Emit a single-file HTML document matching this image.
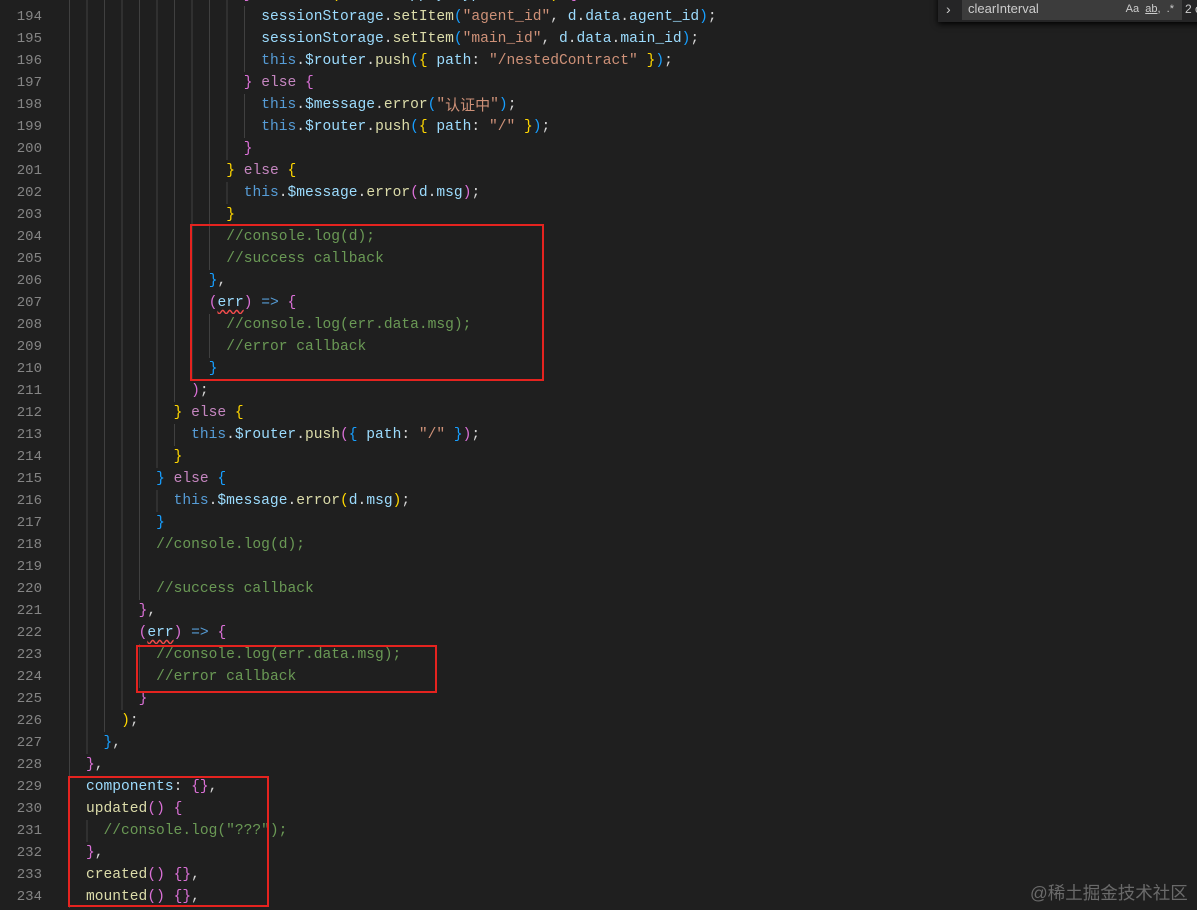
<!DOCTYPE html>
<html><head><meta charset="utf-8"><style>
html,body{margin:0;padding:0;background:#1f1f1f;width:1197px;height:910px;overflow:hidden;position:relative}
.code{position:absolute;left:0;top:-16px;font-family:"Liberation Mono","Noto Sans CJK SC",monospace;font-size:14.6px;}
.l{height:22px;line-height:22px;white-space:pre;display:flex;overflow:hidden}
.n{width:42px;text-align:right;color:#858585;font-size:14px;flex:none;}
.g{margin-left:26.5px;flex:none;height:22px;background:repeating-linear-gradient(to right,#404040 0 1px,transparent 1px 17.52px);}
.t{color:#d4d4d4}
.c{color:#6a9955}.s{color:#ce9178}.v{color:#9cdcfe}.f{color:#dcdcaa}.k{color:#569cd6}.e{color:#c586c0}
.y{color:#ffd700}.p{color:#da70d6}.b{color:#179fff}
.cjk{font-family:"Noto Sans CJK SC",sans-serif;font-size:15px;display:inline-block;height:22px;line-height:22px;vertical-align:top}
.sq{text-decoration:underline wavy #f14c4c;text-underline-offset:3px}
.box{position:absolute;border:2px solid #e5231f;box-sizing:border-box}
.find{position:absolute;left:938px;top:-6px;width:270px;height:28px;background:#252526;box-shadow:0 2px 6px #000}
.inp{position:absolute;left:24px;top:4px;width:220px;height:22px;background:#3c3c3c;color:#ccc;font-family:"Liberation Sans",sans-serif;font-size:13px;line-height:22px;padding-left:6px;box-sizing:border-box}
.wm{position:absolute;left:1030px;top:880px;color:#6a6a6a;font-family:"Liberation Sans","Noto Sans CJK SC",sans-serif;font-size:17.5px}
</style></head><body>
<div class="code">
<div class="l"><span class="n">193</span><span class="g" style="width:175.2px"></span><span class="t"><span class="p">}</span> <span class="e">else if</span> <span class="y">(</span><span class="v">d</span>.<span class="v">data</span>.<span class="v">apply_type</span> == <span class="s">"2"</span><span class="y">)</span> <span class="p">{</span></span></div>
<div class="l"><span class="n">194</span><span class="g" style="width:192.7px"></span><span class="t"><span class="v">sessionStorage</span>.<span class="f">setItem</span><span class="b">(</span><span class="s">"agent_id"</span>, <span class="v">d</span>.<span class="v">data</span>.<span class="v">agent_id</span><span class="b">)</span>;</span></div>
<div class="l"><span class="n">195</span><span class="g" style="width:192.7px"></span><span class="t"><span class="v">sessionStorage</span>.<span class="f">setItem</span><span class="b">(</span><span class="s">"main_id"</span>, <span class="v">d</span>.<span class="v">data</span>.<span class="v">main_id</span><span class="b">)</span>;</span></div>
<div class="l"><span class="n">196</span><span class="g" style="width:192.7px"></span><span class="t"><span class="k">this</span>.<span class="v">$router</span>.<span class="f">push</span><span class="b">(</span><span class="y">{</span> <span class="v">path</span>: <span class="s">"/nestedContract"</span> <span class="y">}</span><span class="b">)</span>;</span></div>
<div class="l"><span class="n">197</span><span class="g" style="width:175.2px"></span><span class="t"><span class="p">}</span> <span class="e">else</span> <span class="p">{</span></span></div>
<div class="l"><span class="n">198</span><span class="g" style="width:192.7px"></span><span class="t"><span class="k">this</span>.<span class="v">$message</span>.<span class="f">error</span><span class="b">(</span><span class="s">"<span class="cjk">认证中</span>"</span><span class="b">)</span>;</span></div>
<div class="l"><span class="n">199</span><span class="g" style="width:192.7px"></span><span class="t"><span class="k">this</span>.<span class="v">$router</span>.<span class="f">push</span><span class="b">(</span><span class="y">{</span> <span class="v">path</span>: <span class="s">"/"</span> <span class="y">}</span><span class="b">)</span>;</span></div>
<div class="l"><span class="n">200</span><span class="g" style="width:175.2px"></span><span class="t"><span class="p">}</span></span></div>
<div class="l"><span class="n">201</span><span class="g" style="width:157.7px"></span><span class="t"><span class="y">}</span> <span class="e">else</span> <span class="y">{</span></span></div>
<div class="l"><span class="n">202</span><span class="g" style="width:175.2px"></span><span class="t"><span class="k">this</span>.<span class="v">$message</span>.<span class="f">error</span><span class="p">(</span><span class="v">d</span>.<span class="v">msg</span><span class="p">)</span>;</span></div>
<div class="l"><span class="n">203</span><span class="g" style="width:157.7px"></span><span class="t"><span class="y">}</span></span></div>
<div class="l"><span class="n">204</span><span class="g" style="width:157.7px"></span><span class="c">//console.log(d);</span></div>
<div class="l"><span class="n">205</span><span class="g" style="width:157.7px"></span><span class="c">//success callback</span></div>
<div class="l"><span class="n">206</span><span class="g" style="width:140.2px"></span><span class="t"><span class="b">}</span>,</span></div>
<div class="l"><span class="n">207</span><span class="g" style="width:140.2px"></span><span class="t"><span class="p">(</span><span class="v sq">err</span><span class="p">)</span> <span class="k">=&gt;</span> <span class="p">{</span></span></div>
<div class="l"><span class="n">208</span><span class="g" style="width:157.7px"></span><span class="c">//console.log(err.data.msg);</span></div>
<div class="l"><span class="n">209</span><span class="g" style="width:157.7px"></span><span class="c">//error callback</span></div>
<div class="l"><span class="n">210</span><span class="g" style="width:140.2px"></span><span class="t"><span class="b">}</span></span></div>
<div class="l"><span class="n">211</span><span class="g" style="width:122.6px"></span><span class="t"><span class="p">)</span>;</span></div>
<div class="l"><span class="n">212</span><span class="g" style="width:105.1px"></span><span class="t"><span class="y">}</span> <span class="e">else</span> <span class="y">{</span></span></div>
<div class="l"><span class="n">213</span><span class="g" style="width:122.6px"></span><span class="t"><span class="k">this</span>.<span class="v">$router</span>.<span class="f">push</span><span class="p">(</span><span class="b">{</span> <span class="v">path</span>: <span class="s">"/"</span> <span class="b">}</span><span class="p">)</span>;</span></div>
<div class="l"><span class="n">214</span><span class="g" style="width:105.1px"></span><span class="t"><span class="y">}</span></span></div>
<div class="l"><span class="n">215</span><span class="g" style="width:87.6px"></span><span class="t"><span class="b">}</span> <span class="e">else</span> <span class="b">{</span></span></div>
<div class="l"><span class="n">216</span><span class="g" style="width:105.1px"></span><span class="t"><span class="k">this</span>.<span class="v">$message</span>.<span class="f">error</span><span class="y">(</span><span class="v">d</span>.<span class="v">msg</span><span class="y">)</span>;</span></div>
<div class="l"><span class="n">217</span><span class="g" style="width:87.6px"></span><span class="t"><span class="b">}</span></span></div>
<div class="l"><span class="n">218</span><span class="g" style="width:87.6px"></span><span class="c">//console.log(d);</span></div>
<div class="l"><span class="n">219</span><span class="g" style="width:87.6px"></span></div>
<div class="l"><span class="n">220</span><span class="g" style="width:87.6px"></span><span class="c">//success callback</span></div>
<div class="l"><span class="n">221</span><span class="g" style="width:70.1px"></span><span class="t"><span class="p">}</span>,</span></div>
<div class="l"><span class="n">222</span><span class="g" style="width:70.1px"></span><span class="t"><span class="p">(</span><span class="v sq">err</span><span class="p">)</span> <span class="k">=&gt;</span> <span class="p">{</span></span></div>
<div class="l"><span class="n">223</span><span class="g" style="width:87.6px"></span><span class="c">//console.log(err.data.msg);</span></div>
<div class="l"><span class="n">224</span><span class="g" style="width:87.6px"></span><span class="c">//error callback</span></div>
<div class="l"><span class="n">225</span><span class="g" style="width:70.1px"></span><span class="t"><span class="p">}</span></span></div>
<div class="l"><span class="n">226</span><span class="g" style="width:52.6px"></span><span class="t"><span class="y">)</span>;</span></div>
<div class="l"><span class="n">227</span><span class="g" style="width:35px"></span><span class="t"><span class="b">}</span>,</span></div>
<div class="l"><span class="n">228</span><span class="g" style="width:17.5px"></span><span class="t"><span class="p">}</span>,</span></div>
<div class="l"><span class="n">229</span><span class="g" style="width:17.5px"></span><span class="t"><span class="v">components</span>: <span class="p">{}</span>,</span></div>
<div class="l"><span class="n">230</span><span class="g" style="width:17.5px"></span><span class="t"><span class="f">updated</span><span class="p">()</span> <span class="p">{</span></span></div>
<div class="l"><span class="n">231</span><span class="g" style="width:35px"></span><span class="c">//console.log("???");</span></div>
<div class="l"><span class="n">232</span><span class="g" style="width:17.5px"></span><span class="t"><span class="p">}</span>,</span></div>
<div class="l"><span class="n">233</span><span class="g" style="width:17.5px"></span><span class="t"><span class="f">created</span><span class="p">()</span> <span class="p">{}</span>,</span></div>
<div class="l"><span class="n">234</span><span class="g" style="width:17.5px"></span><span class="t"><span class="f">mounted</span><span class="p">()</span> <span class="p">{}</span>,</span></div>
</div>
<div class="box" style="left:190px;top:224px;width:354px;height:157px"></div>
<div class="box" style="left:136px;top:645px;width:301px;height:48px"></div>
<div class="box" style="left:68px;top:776px;width:201px;height:131px"></div>
<div class="find">
<span style="position:absolute;left:8px;top:4px;color:#ccc;font-family:'Liberation Sans',sans-serif;font-size:14px;line-height:22px">&#8250;</span>
<div class="inp">clearInterval<span style="position:absolute;right:8px;top:0;font-size:11px;color:#ccc">Aa&nbsp;&nbsp;<u>ab</u>,&nbsp;&nbsp;.*</span></div>
<span style="position:absolute;left:247px;top:4px;color:#ccc;font-family:'Liberation Sans',sans-serif;font-size:12px;line-height:22px">2 o</span>
</div>
<div class="wm">@稀土掘金技术社区</div>
</body></html>
